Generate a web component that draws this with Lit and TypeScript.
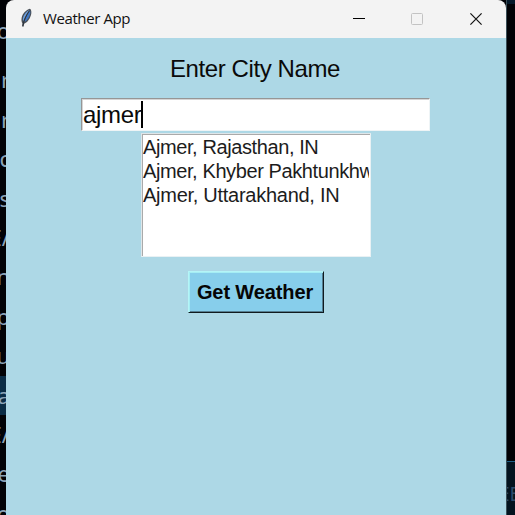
import { LitElement, html, css, svg } from "lit";
import { customElement, state } from "lit/decorators.js";

const feather = svg`
  <path d="M10.800 .8C7.200 1.800 3.600 5.500 2.700 9.500C2.200 12 2.500 14 3.400 15.300L3.100 18.600L4.500 18.700L5.200 15.700C8.500 14.500 11.600 10 12.300 5.500C12.600 3.300 12.100 1.200 10.800 .8Z" fill="#4a5058"/>
  <path d="M10.300 2C7.500 3.300 4.700 6.500 4 10C3.800 11.500 3.900 12.500 4.200 13.300C5.500 9.500 7.700 5.500 10.300 2Z" fill="#6ba0e0"/>
  <path d="M11 2.500C9 5.500 6.500 9.500 5.500 14C8.300 12.500 10.500 9 11.200 5.500C11.400 4.200 11.300 3.200 11 2.500Z" fill="#3f78c6"/>
  <path d="M10.300 3C7.500 7 5 11.500 3.800 18" stroke="#20252c" stroke-width=".7" fill="none"/>`;

@customElement("editor-edge")
class EditorEdge extends LitElement {
  static styles = css`
    :host { display: block; overflow: hidden; background: #010206; color: #8ba3b8;
      font: 22px/39.4px "Noto Sans", sans-serif; }
    .lines { display: flex; flex-direction: column; padding-top: 11px; }
    .line { display: flex; justify-content: flex-end; height: 39.4px; width: 6px; flex-shrink: 0; white-space: pre; }
    .line.first { height: 49.4px; }
    .line span { margin-right: -4px; }
    .line.cut span { margin-right: -4px; }
    .line.current { background: #0a2c45; }
  `;
  render() {
    const rows = ["o", "r", "r", "c", "s", "E/", "n", "p", "u", "a", "E/", "e", "o"];
    return html`<div class="lines">${rows.map(
      (t, i) => html`<div class="line ${t === "r" ? "cut" : ""} ${i === 0 ? "first" : ""} ${i === 9 ? "current" : ""}"><span>${t}</span></div>`
    )}</div>`;
  }
}

@customElement("title-bar")
class TitleBar extends LitElement {
  static styles = css`
    :host { display: flex; align-items: center; height: 38px; background: #f3f3f3;
      border-radius: 8px 8px 0 0; color: #111; box-sizing: border-box; padding-left: 13px; }
    .logo { width: 14px; height: 20px; margin-top: -2px; }
    .name { font: 15px/20px "Open Sans", "Noto Sans", sans-serif; letter-spacing: -0.4px; margin: -2px 0 0 10px; flex: 1; white-space: nowrap; }
    .ctl { width: 58.5px; display: flex; justify-content: center; }
    .ctl:last-child { margin-right: 1px; }
    .ctl svg { display: block; }
  `;
  render() {
    return html`
      <svg class="logo" viewBox="0 0 14 20">${feather}</svg>
      <span class="name">Weather App</span>
      <span class="ctl"><svg width="12" height="12"><path d="M0 5.500H12" stroke="#000"/></svg></span>
      <span class="ctl"><svg width="12" height="12"><rect x=".5" y=".5" width="11" height="11" rx="1" fill="none" stroke="#c3c3c3"/></svg></span>
      <span class="ctl"><svg width="12" height="12"><path d="M.4 .4L11.600 11.600M11.600 .4L.4 11.600" stroke="#111" stroke-width="1.200"/></svg></span>
    `;
  }
}

@customElement("app-root")
class AppRoot extends LitElement {
  @state() city = "ajmer";
  @state() matches = ["Ajmer, Rajasthan, IN", "Ajmer, Khyber Pakhtunkhwa, PK", "Ajmer, Uttarakhand, IN"];

  static styles = css`
    :host { display: grid; grid-template-columns: 6px 500px 9px; grid-template-rows: 515px; width: 515px; height: 515px;
      overflow: hidden; background: #010206; font-family: "Liberation Sans", Arial, sans-serif; color: #0a0a0a; }
    .window { display: flex; flex-direction: column; }
    .body { flex: 1; background: #add8e6; display: flex; flex-direction: column; align-items: center; }
    .label { font-size: 24px; line-height: 28px; letter-spacing: -0.4px; margin: 17px 2px 0 0; white-space: nowrap; }
    .entry { box-sizing: border-box; width: 349px; height: 33px; margin: 15px 1px 0 0; background: #fff;
      border: 1px solid; border-color: #969696 #eef4f6 #eef4f6 #969696;
      box-shadow: inset 1px 1px #d5d5d5; display: flex; align-items: center; padding-left: 1px;
      font-size: 24px; line-height: 28px; letter-spacing: -0.3px; }
    .entry span { margin-top: 1px; }
    .caret { width: 2px; height: 27px; background: #000; margin-left: -0.5px; }
    .list { box-sizing: border-box; width: 230px; height: 124px; margin-top: 2px; background: #fff;
      border: 1px solid; border-color: #dfe6e9 #e9f1f4 #e9f1f4 #dfe6e9;
      box-shadow: inset 1px 1px #aaa; padding: 1px 1px 0 1px; }
    .rows { overflow: hidden; }
    .row { font-size: 20px; line-height: 24px; letter-spacing: -0.4px; white-space: nowrap; color: #1c1c1c; }
    .row:last-child { letter-spacing: -0.27px; }
    .btn { box-sizing: border-box; width: 136px; height: 42px; margin-top: 14px; background: #87ceeb;
      border: 1px solid; border-color: #b4f5f7 #101a1f #101a1f #b4f5f7;
      box-shadow: inset 1px 1px #a5edf4, inset -1px -1px #557f92;
      display: flex; align-items: center; justify-content: center; padding-right: 2px;
      font-size: 20px; font-weight: bold; letter-spacing: -0.12px; white-space: nowrap; color: #050505; }
    .right { display: flex; flex-direction: column; background: #010206; border-left: 1px solid #3b4f58; overflow: hidden; }
    .strip { height: 4px; flex-shrink: 0; background: #05192a; }
    .gap { height: 457px; flex-shrink: 0; }
    .panel { height: 53px; flex-shrink: 0; border-top: 1px solid #1f5f85; background: #03131f; color: #2c4b6b;
      font: 19px/64px "Noto Sans", sans-serif; white-space: nowrap; }
    .panel span { margin-left: -8px; }
  `;

  render() {
    return html`
      <editor-edge></editor-edge>
      <div class="window">
        <title-bar></title-bar>
        <div class="body">
          <div class="label">Enter City Name</div>
          <div class="entry"><span>${this.city}</span><i class="caret"></i></div>
          <div class="list"><div class="rows">${this.matches.map((m) => html`<div class="row">${m}</div>`)}</div></div>
          <div class="btn">Get Weather</div>
        </div>
      </div>
      <div class="right"><div class="strip"></div><div class="gap"></div><div class="panel"><span>EE</span></div></div>
    `;
  }
}
